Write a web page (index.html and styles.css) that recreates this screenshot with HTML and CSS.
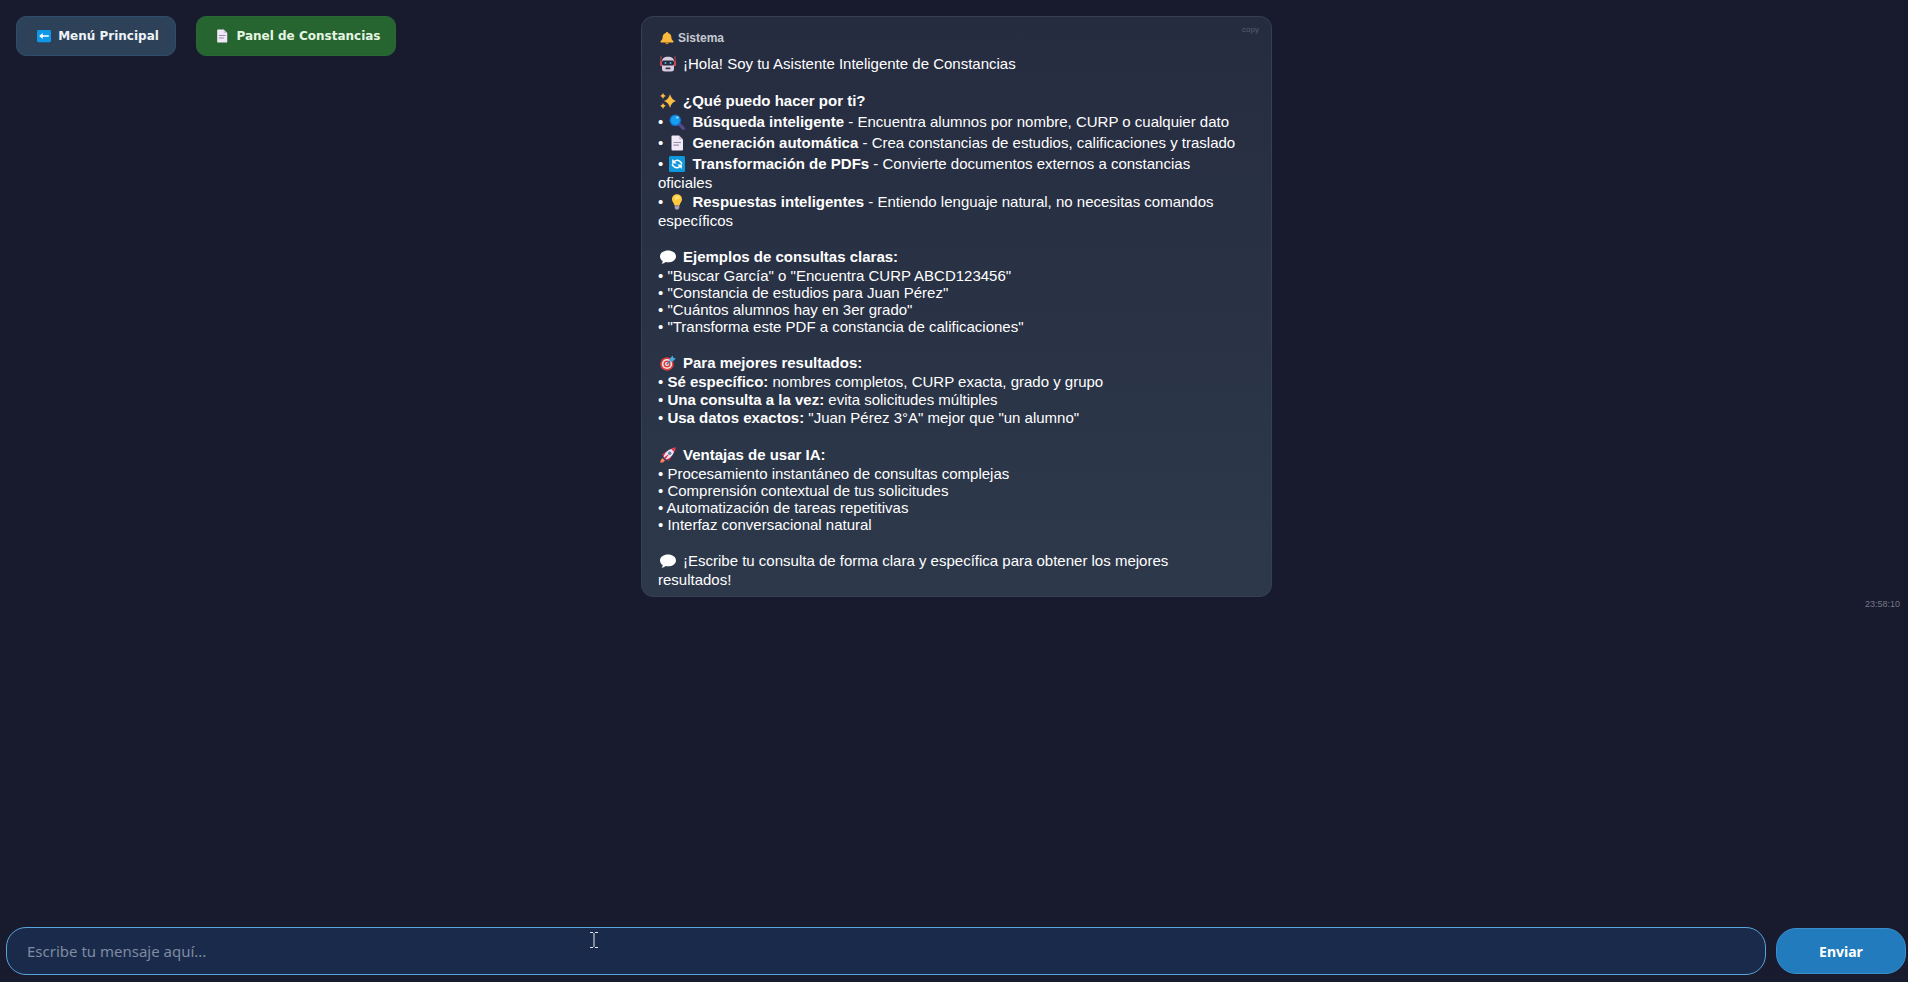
FILE: index.html
```html
<!DOCTYPE html>
<html lang="es">
<head>
<meta charset="utf-8">
<title>Asistente Inteligente de Constancias</title>
<link rel="stylesheet" href="styles.css">
</head>
<body>
<svg class="sprite" aria-hidden="true">
  <symbol id="page" viewBox="0 0 16 16"><path fill="#f1e9f7" d="M2.500 1.500q0-1 1-1H10l4 4v10q0 1-1 1H3.500q-1 0-1-1z"/><path fill="#cdbfd8" d="M10 .5l4 4h-3.200q-.8 0-.8-.8z"/><path stroke="#998ea4" stroke-width="1.200" d="M4.500 7.500h7.500M4.500 10.200h5.500"/></symbol>
  <symbol id="speech" viewBox="0 0 16 16"><path fill="#fff" d="M8 1.500c4.400 0 8 2.500 8 5.900s-3.600 5.900-8 5.900c-.9 0-1.700-.1-2.500-.3-1 1-2.300 1.600-4 1.700.8-.8 1.200-1.700 1.200-2.800C1 10.900 0 9.200 0 7.400c0-3.400 3.600-5.900 8-5.900z"/></symbol>
</svg>
<div class="app">
  <main class="chat">
    <nav class="toolbar">
      <button class="nav-btn" type="button"><svg class="icon-sm" viewBox="0 0 16 16" aria-hidden="true"><rect y="1" width="16" height="14" rx="1.500" fill="#0f97e8"/><path d="M2.500 8l4-3.500v2.600h7v1.800h-7v2.600z" fill="#fff"/></svg>Menú Principal</button>
      <button class="nav-btn nav-btn-green" type="button"><svg class="icon-sm" aria-hidden="true"><use href="#page"/></svg>Panel de Constancias</button>
    </nav>
    <article class="message">
      <button class="copy" type="button">copy</button>
      <header class="sender"><svg class="icon-sm" viewBox="0 0 16 16" aria-hidden="true"><path fill="#fcb83a" d="M8 1q1.300 0 1.500 1.200c2.300.7 3.300 2.500 3.500 5 .1 2 .5 3 2 4.100 1 .7.700 1.700-.5 1.700H1.500C.3 13 0 12 1 11.300c1.500-1.100 1.900-2.100 2-4.100.2-2.500 1.200-4.300 3.500-5Q6.700 1 8 1z"/><path fill="#e48b25" d="M5.800 13h4.400q-.4 2-2.200 2t-2.200-2z"/></svg>Sistema</header>
      <p class="line"><svg class="icon" viewBox="0 0 16 16" aria-hidden="true"><path stroke="#b8474e" stroke-width="1" d="M1 0v7M15 0v7"/><path fill="#c9484e" d="M0 5h2v5H0zM14 5h2v5h-2z"/><path fill="#d8cce0" d="M8 .8c4 0 6 2 6 4.700V13q0 2.500-3 2.500H5q-3 0-3-2.500V5.500C2 2.800 4 .8 8 .8z"/><rect x="2" y="4.500" width="12" height="5" rx="1.500" fill="#27283c"/><circle cx="5.500" cy="7" r="1" fill="#45b9e5"/><circle cx="10.500" cy="7" r="1" fill="#45b9e5"/><rect x="5.500" y="11.500" width="5" height="1.800" rx=".8" fill="#393349"/></svg>¡Hola! Soy tu Asistente Inteligente de Constancias</p>

      <section class="block">
        <h2 class="heading"><svg class="icon" viewBox="0 0 16 16" aria-hidden="true"><path fill="#fcbd42" d="M10 1q1.200 5.400 6 7-4.800 1.600-6 7-1.200-5.400-6-7 4.800-1.600 6-7zM3 0q.5 2.300 2.800 2.900Q3.500 3.500 3 6 2.500 3.500.2 2.900 2.500 2.300 3 0zM3 10q.5 2.200 2.800 2.800Q3.500 13.500 3 16q-.5-2.500-2.800-3.200Q2.500 12.200 3 10z"/></svg>¿Qué puedo hacer por ti?</h2>
        <ul class="list list-features">
          <li class="spaced">• <svg class="icon" viewBox="0 0 16 16" aria-hidden="true"><path stroke="#56478f" stroke-width="3.200" stroke-linecap="round" d="M10.500 10.500l3.800 3.800"/><circle cx="6.300" cy="6.300" r="5.800" fill="#1672cf"/><circle cx="6.300" cy="6.300" r="4.500" fill="#169ff0"/><ellipse cx="8.300" cy="3.600" rx="1.500" ry="1" fill="#8fdcff"/></svg><strong>Búsqueda inteligente</strong> - Encuentra alumnos por nombre, CURP o cualquier dato</li>
          <li class="spaced">• <svg class="icon" aria-hidden="true"><use href="#page"/></svg><strong>Generación automática</strong> - Crea constancias de estudios, calificaciones y traslado</li>
          <li>• <svg class="icon" viewBox="0 0 16 16" aria-hidden="true"><rect width="16" height="16" rx="1.500" fill="#0f97db"/><path fill="none" stroke="#fff" stroke-width="1.500" d="M5 5.600Q8 3 10.800 5.300T12 8M11 10.400Q8 13 5.200 10.700T4 8"/><path fill="#fff" d="M3.200 3v4.500h4.500zM12.800 13V8.500H8.300z"/></svg><strong>Transformación de PDFs</strong> - Convierte documentos externos a constancias oficiales</li>
          <li>• <svg class="icon" viewBox="0 0 16 16" aria-hidden="true"><path fill="#ffc83d" d="M8 .3c3 0 5 2.200 5 4.900 0 2.500-2 3.600-2.500 6.300h-5C5 8.800 3 7.700 3 5.200 3 2.500 5 .3 8 .3z"/><path fill="#ffe27a" d="M7 2c2-.8 4 .7 4 2.800-1.800-.2-3.800.3-4.600 1.500C5.300 5 5.700 2.500 7 2z"/><path fill="#a99caf" d="M5.700 11.500h4.600v2.600Q10 15.700 8 15.700t-2.300-1.600z"/></svg><strong>Respuestas inteligentes</strong> - Entiendo lenguaje natural, no necesitas comandos específicos</li>
        </ul>
      </section>

      <section class="block block-examples">
        <h2 class="heading"><svg class="icon" aria-hidden="true"><use href="#speech"/></svg>Ejemplos de consultas claras:</h2>
        <ul class="list">
          <li>• "Buscar García" o "Encuentra CURP ABCD123456"</li>
          <li>• "Constancia de estudios para Juan Pérez"</li>
          <li>• "Cuántos alumnos hay en 3er grado"</li>
          <li>• "Transforma este PDF a constancia de calificaciones"</li>
        </ul>
      </section>

      <section class="block">
        <h2 class="heading"><svg class="icon" viewBox="0 0 16 16" aria-hidden="true"><circle cx="7" cy="9" r="6.800" fill="#d93f3c"/><circle cx="7" cy="9" r="5.100" fill="#f5e9ee"/><circle cx="7" cy="9" r="3.600" fill="#d93f3c"/><circle cx="7" cy="9" r="2" fill="#f5e9ee"/><circle cx="7" cy="9" r=".8" fill="#d93f3c"/><path d="M7 9l5-5" stroke="#287eb5" stroke-width="1.200"/><path fill="#45a9e5" d="M10 3.500L12.700.5l.5 2.300 2.600.7L13 6.300l-3-.3z"/></svg>Para mejores resultados:</h2>
        <ul class="list list-tips">
          <li>• <strong>Sé específico:</strong> nombres completos, CURP exacta, grado y grupo</li>
          <li>• <strong>Una consulta a la vez:</strong> evita solicitudes múltiples</li>
          <li>• <strong>Usa datos exactos:</strong> "Juan Pérez 3°A" mejor que "un alumno"</li>
        </ul>
      </section>

      <section class="block">
        <h2 class="heading"><svg class="icon" viewBox="0 0 16 16" aria-hidden="true"><path fill="#cf2f4d" d="M2 7.500l4-3 3 1-5 5zM8.500 14l3-4-1-3-5 5z"/><path fill="#efe4ef" d="M3.500 10C5 5 9 1.500 14.500 1.500 14.500 7 11 11 6 12.500z"/><path fill="#e33d55" d="M11 1.800Q13.500.3 15.800.2q0 2.500-1.600 5z"/><circle cx="9.700" cy="6.300" r="1.700" fill="#5e85ad"/><path fill="#cf2f4d" d="M4 10.500l4-3 .5.500-3 4z"/><path fill="#ff8257" d="M2.500 11l2.500 2.500Q3.500 16 .3 15.700.2 12.500 2.500 11z"/></svg>Ventajas de usar IA:</h2>
        <ul class="list">
          <li>• Procesamiento instantáneo de consultas complejas</li>
          <li>• Comprensión contextual de tus solicitudes</li>
          <li>• Automatización de tareas repetitivas</li>
          <li>• Interfaz conversacional natural</li>
        </ul>
      </section>

      <p class="line block"><svg class="icon" aria-hidden="true"><use href="#speech"/></svg>¡Escribe tu consulta de forma clara y específica para obtener los mejores resultados!</p>
    </article>
    <time class="stamp">23:58:10</time>
  </main>

  <form class="composer">
    <input class="field" type="text" placeholder="Escribe tu mensaje aquí..." aria-label="Escribe tu mensaje aquí">
    <button class="send" type="button">Enviar</button>
    <svg class="pointer" viewBox="0 0 8 16" aria-hidden="true"><path d="M0 .5h3M5 .5h3M4 1v14M0 15.500h3M5 15.500h3" stroke="#e6eaf0"/></svg>
  </form>
</div>
</body>
</html>
```
FILE: styles.css
```css
* { box-sizing: border-box; }
body {
  margin: 0;
  background: #181a2d;
  color: #fff;
  font-family: "Liberation Sans", Arial, sans-serif;
  font-size: 15px;
}
button { font: inherit; color: inherit; border: 0; cursor: pointer; }
h2, p, ul { margin: 0; padding: 0; }
.sprite { position: absolute; width: 0; height: 0; }

.app { display: flex; flex-direction: column; min-height: 100vh; }
.chat {
  flex: 1;
  display: grid;
  grid-template-columns: 1fr 631px 1fr;
  align-content: start;
  padding: 16px 8px 0 13px;
}

.toolbar { display: flex; align-items: flex-start; gap: 20px; padding-left: 3px; }
.nav-btn {
  display: flex;
  align-items: center;
  justify-content: center;
  gap: 7px;
  width: 160px;
  height: 40px;
  padding: 0 0 0 4px;
  background: #2d4259;
  border: 1px solid #2e4d6d;
  border-radius: 10px;
  color: #eef3f8;
  font: bold 12px "DejaVu Sans", Verdana, sans-serif;
  white-space: nowrap;
}
.nav-btn-green { width: 200px; background: #26652f; border-color: #286a33; color: #e5f5e4; }
.icon-sm { width: 14px; height: 14px; flex: none; }

.message {
  position: relative;
  padding: 12px 30px 7px 16px;
  border: 1px solid #354053;
  border-radius: 12px;
  background: linear-gradient(#262c40, #2d394b);
}
.copy {
  position: absolute;
  top: 8px;
  right: 12px;
  padding: 0;
  background: none;
  color: #535d70;
  font-size: 8px;
  line-height: 10px;
}
.sender {
  display: flex;
  align-items: center;
  gap: 4px;
  margin-bottom: 7px;
  padding-left: 2px;
  color: #c5c9d0;
  font-size: 12px;
  font-weight: bold;
  line-height: 18px;
}
.line, .heading { font-size: 15px; line-height: 19px; }
.heading { font-weight: bold; }
.block { margin-top: 18px; }
.block-examples { margin-top: 17px; }
.icon { width: 16px; height: 16px; margin: 0 7px 0 2px; vertical-align: -3px; }

.list { list-style: none; line-height: 17px; margin-top: 1px; }
.list-features { line-height: 19px; margin-top: 2px; }
.list-features .spaced { margin-bottom: 2px; }
.list-tips { line-height: 18px; }

.stamp {
  grid-column: 3;
  grid-row: 2;
  justify-self: end;
  color: #777988;
  font-size: 9px;
  line-height: 14px;
}

.composer { position: relative; display: flex; align-items: center; gap: 10px; padding: 0 2px 7px 6px; }
.field {
  flex: 1;
  min-width: 0;
  height: 48px;
  padding: 0 20px;
  border: 1px solid #5ba3dc;
  border-radius: 20px;
  background: #1a2a4a;
  color: #fff;
  font: 15px "Noto Sans", sans-serif;
  outline: 0;
}
.field::placeholder { color: #7d8ba3; opacity: 1; }
.send {
  width: 130px;
  height: 46px;
  border: 1px solid #3a8ccb;
  border-radius: 20px;
  background: #217bbd;
  font: bold 14px "Noto Sans", sans-serif;
}
.pointer { position: absolute; left: 590px; top: 5px; width: 8px; height: 16px; }
```
